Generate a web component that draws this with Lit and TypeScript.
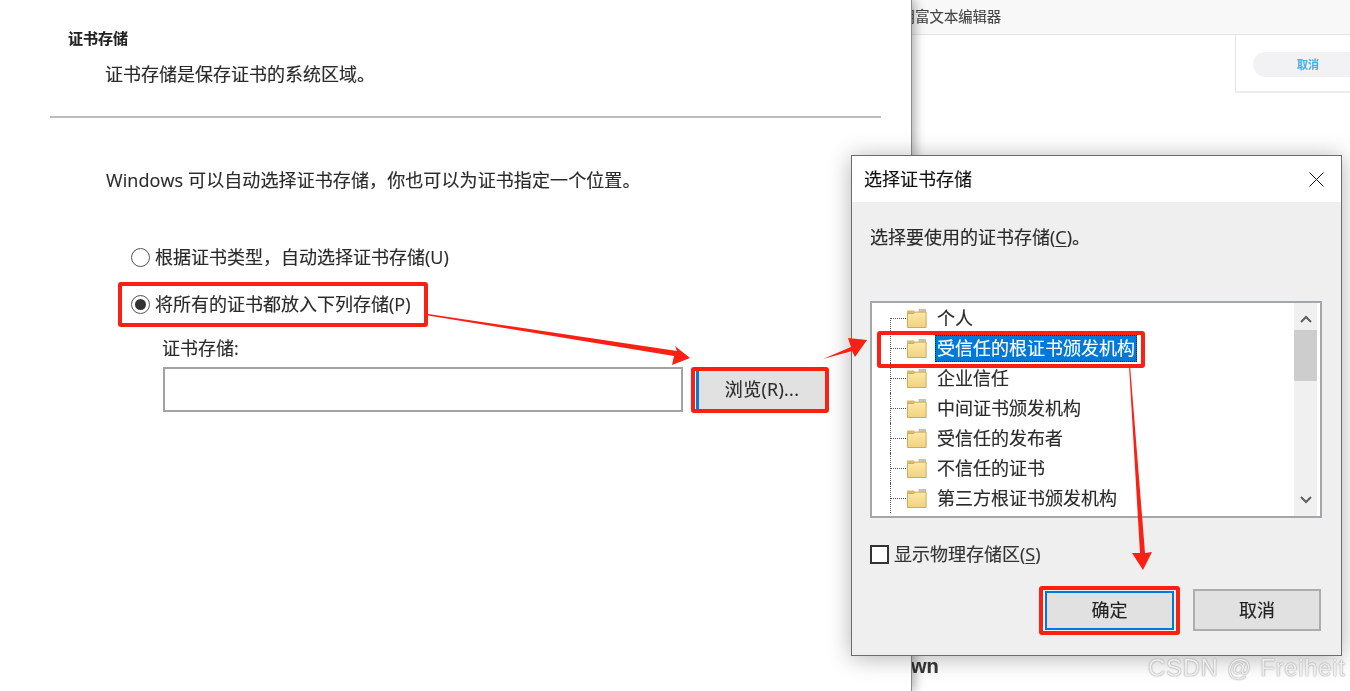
import { LitElement, html, css, svg } from "lit";
import { customElement } from "lit/decorators.js";

const folder = svg`<svg class="folder" width="21" height="21" viewBox="0 0 21 21">
  <defs><linearGradient id="fg" x1="0" y1="0" x2="0" y2="1"><stop offset="0" stop-color="#fce9a6"/><stop offset="1" stop-color="#f2d17f"/></linearGradient></defs>
  <path d="M1 2.500h7l1.500 2h10.500v15H1z" fill="#d8b96f"/>
  <rect x="13" y="1.500" width="6.500" height="3.500" fill="#d6cfa8" stroke="#b5a878" stroke-width=".6"/>
  <rect x="15.500" y="2.300" width="3" height="1.400" fill="#9cc8e0"/>
  <path d="M1.500 5.500h6l1.600-1.400h11v15.400H1.500z" fill="url(#fg)" stroke="#cdaa5e"/>
</svg>`;

const items = ["个人", "受信任的根证书颁发机构", "企业信任", "中间证书颁发机构", "受信任的发布者", "不信任的证书", "第三方根证书颁发机构"];

@customElement("app-root")
export class AppRoot extends LitElement {
  static styles = css`
    :host { display: block; width: 1350px; height: 691px; overflow: hidden; }
    * { box-sizing: border-box; }
    .stage { position: relative; width: 1350px; height: 691px; overflow: hidden; background: #fff; color: #2a2a2a;
      font-family: "Open Sans", "Noto Sans CJK SC", sans-serif; font-size: 18px; filter: blur(0.35px); -webkit-text-stroke: 0.15px currentColor; }

    .page { position: absolute; inset: 0; display: flex; flex-direction: column; }
    .bar { height: 35px; background: #f8f8f8; border-bottom: 1px solid #e4e4e4; padding-left: 901px; font-size: 14.3px; line-height: 33px; color: #444; }
    .panel-row { display: flex; justify-content: flex-end; overflow: hidden; }
    .panel { width: 115px; height: 58px; border-left: 1px solid #e6e6e6; border-bottom: 2px solid #ececec; padding: 17px 0 0 17px; overflow: hidden; }
    .pill { width: 110px; height: 25px; border-radius: 13px; background: #f2f2f5; color: #4fb0e5; font-size: 11px; font-weight: 700; line-height: 25px; text-align: center; }
    .wn { position: absolute; left: 911px; top: 653px; font: bold 20px/26px "Liberation Sans", sans-serif; color: #3a3a3a; }

    .wizard { position: absolute; left: 0; top: 0; width: 912px; height: 691px; background: #fff; border-right: 1px solid #8a8a8a;
      box-shadow: 3px 0 10px rgba(0,0,0,.32); padding-top: 28px; display: flex; flex-direction: column; }
    .h { margin-left: 68px; font-size: 15px; font-weight: 700; line-height: 20px; color: #222; }
    .p { margin: 14px 0 0 105px; line-height: 24px; }
    .rule { height: 2px; margin: 30px 30px 0 50px; background: #bdbdbd; }
    .win { margin: 50px 0 0 106px; line-height: 24px; letter-spacing: .1px; }
    .radio-row { display: flex; align-items: center; gap: 5px; margin-left: 131px; height: 24px; }
    .radio-row .t { margin-bottom: 2px; }
    .r1 { margin-top: 53px; }
    .r2 { margin-top: 23px; }
    .radio { width: 19px; height: 19px; border-radius: 50%; border: 1.5px solid #555; background: #fff; display: flex; align-items: center; justify-content: center; }
    .radio i { width: 11px; height: 11px; border-radius: 50%; background: #333; }
    .label { margin: 20px 0 0 162px; line-height: 24px; }
    .field-row { display: flex; align-items: center; gap: 13px; margin: 7px 0 0 163px; }
    .input { width: 520px; height: 45px; border: 2px solid #a2a2a2; background: #fff; }
    .browse { width: 129px; height: 38px; background: #e1e1e1; border-left: 3px solid #0a7bd8; text-align: center; line-height: 37px; letter-spacing: .3px; }

    .dlg { position: absolute; left: 851px; top: 155px; width: 491px; height: 501px; border: 1px solid #6c6c6c; background: #efefef;
      box-shadow: 0 2px 22px rgba(0,0,0,.3); display: flex; flex-direction: column; }
    .title { height: 46px; background: #fff; display: flex; align-items: center; justify-content: space-between; padding: 0 17px 0 12px; color: #111; }
    .title span { margin-bottom: 3px; }
    .title svg { display: block; }
    .body { flex: 1; padding: 23px 20px 0 18px; display: flex; flex-direction: column; }
    .lead { line-height: 24px; }
    u { text-underline-offset: 2px; text-decoration-thickness: 1px; }
    .tree { margin-top: 52px; width: 452px; height: 217px; border: 2px solid #a4a6a9; background: #fff; display: flex; padding-right: 3px; }
    .list { flex: 1; overflow: hidden; }
    .row { height: 30px; display: flex; align-items: center; padding-left: 18px; }
    .conn { position: relative; width: 16px; height: 30px; border-left: 1px dotted #555; }
    .conn::after { content: ""; position: absolute; left: 0; right: 0; top: 15px; border-top: 1px dotted #555; }
    .row.first .conn { border-left: 0; }
    .row.first .conn::before { content: ""; position: absolute; left: 0; top: 15px; bottom: 0; border-left: 1px dotted #555; }
    .folder { display: block; flex: none; }
    .text { margin: 1px 0 0 10px; line-height: 27px; white-space: nowrap; }
    .sel { margin-left: 8px; padding: 0 2px; height: 27px; background: #0078d7; color: #fff; outline: 1px dotted #222; outline-offset: -1px; }
    .scroll { width: 23px; background: #f0f0f0; display: flex; flex-direction: column; justify-content: space-between; align-items: center; position: relative; }
    .scroll svg { display: block; margin: 12px 0; }
    .thumb { position: absolute; left: 0; right: 0; top: 27px; height: 51px; background: #cdcdcd; }
    .check-row { margin-top: 24px; height: 24px; display: flex; align-items: center; gap: 5px; color: #333; }
    .check-row .t { margin-bottom: 2px; }
    .check { width: 19px; height: 19px; border: 2px solid #333; background: #fff; }
    .btns { display: flex; justify-content: flex-end; align-items: center; gap: 19px; margin-top: 23px; height: 42px; }
    .btn { background: #e1e1e1; text-align: center; color: #222; }
    .ok { width: 129px; height: 39px; border: 2px solid #0078d7; line-height: 34px; }
    .cancel { width: 128px; height: 42px; border: 2px solid #adadad; line-height: 38px; }

    .box { position: absolute; border: 4px solid #fb1f14; border-radius: 3px; }
    .b1 { left: 118px; top: 282px; width: 310px; height: 45px; }
    .b2 { left: 691px; top: 367px; width: 138px; height: 46px; }
    .b3 { left: 877px; top: 331px; width: 268px; height: 37px; }
    .b4 { left: 1039px; top: 586px; width: 141px; height: 49px; }
    .arrows { position: absolute; inset: 0; }
    .mark { position: absolute; left: 1148px; top: 653px; font: 24px/30px "Liberation Sans", sans-serif; letter-spacing: .65px; word-spacing: 1px; color: #ececec; text-shadow: 0 0 1.5px #777; white-space: nowrap; -webkit-text-stroke: 0; }
  `;

  render() {
    return html`<div class="stage">
      <div class="page">
        <div class="bar">用富文本编辑器</div>
        <div class="panel-row"><div class="panel"><div class="pill">取消</div></div></div>
        <div class="wn">wn</div>
      </div>

      <div class="wizard">
        <div class="h">证书存储</div>
        <div class="p">证书存储是保存证书的系统区域。</div>
        <div class="rule"></div>
        <div class="win">Windows 可以自动选择证书存储，你也可以为证书指定一个位置。</div>
        <div class="radio-row r1"><span class="radio"></span><span class="t">根据证书类型，自动选择证书存储(U)</span></div>
        <div class="radio-row r2"><span class="radio"><i></i></span><span class="t">将所有的证书都放入下列存储(P)</span></div>
        <div class="label">证书存储:</div>
        <div class="field-row"><div class="input"></div><div class="browse">浏览(R)...</div></div>
      </div>

      <div class="dlg">
        <div class="title"><span>选择证书存储</span>
          <svg width="15" height="15" viewBox="0 0 15 15"><path d="M.5.5l14 14M14.500.5l-14 14" stroke="#111" stroke-width="1" fill="none"/></svg>
        </div>
        <div class="body">
          <div class="lead">选择要使用的证书存储(<u>C</u>)。</div>
          <div class="tree">
            <div class="list">
              ${items.map((t, i) => html`<div class="row ${i === 0 ? "first" : ""}"><span class="conn"></span>${folder}<span class="text ${i === 1 ? "sel" : ""}">${t}</span></div>`)}
            </div>
            <div class="scroll">
              <div class="thumb"></div>
              <svg width="12" height="8" viewBox="0 0 12 8"><path d="M1 7l5-5 5 5" stroke="#606060" stroke-width="2" fill="none"/></svg>
              <svg width="12" height="8" viewBox="0 0 12 8"><path d="M1 1l5 5 5-5" stroke="#606060" stroke-width="2" fill="none"/></svg>
            </div>
          </div>
          <div class="check-row"><span class="check"></span><span class="t">显示物理存储区(<u>S</u>)</span></div>
          <div class="btns"><div class="btn ok">确定</div><div class="btn cancel">取消</div></div>
        </div>
      </div>

      <div class="mark">CSDN @ Freiheit</div>

      <div class="box b1"></div>
      <div class="box b2"></div>
      <div class="box b3"></div>
      <div class="box b4"></div>
      <svg class="arrows" width="1350" height="691" viewBox="0 0 1350 691">
        <path fill="#fb1f14" d="M428 314L677 351L675 346L690 358L672 365L674 356L428 315.500z"/>
        <path fill="#fb1f14" d="M823 359L851 347L848 338L867 340L855 357L852 351z"/>
        <path fill="#fb1f14" d="M1129 365L1130 365L1145 553L1152 552L1143 570L1132 553L1140 553z"/>
      </svg>
    </div>`;
  }
}
